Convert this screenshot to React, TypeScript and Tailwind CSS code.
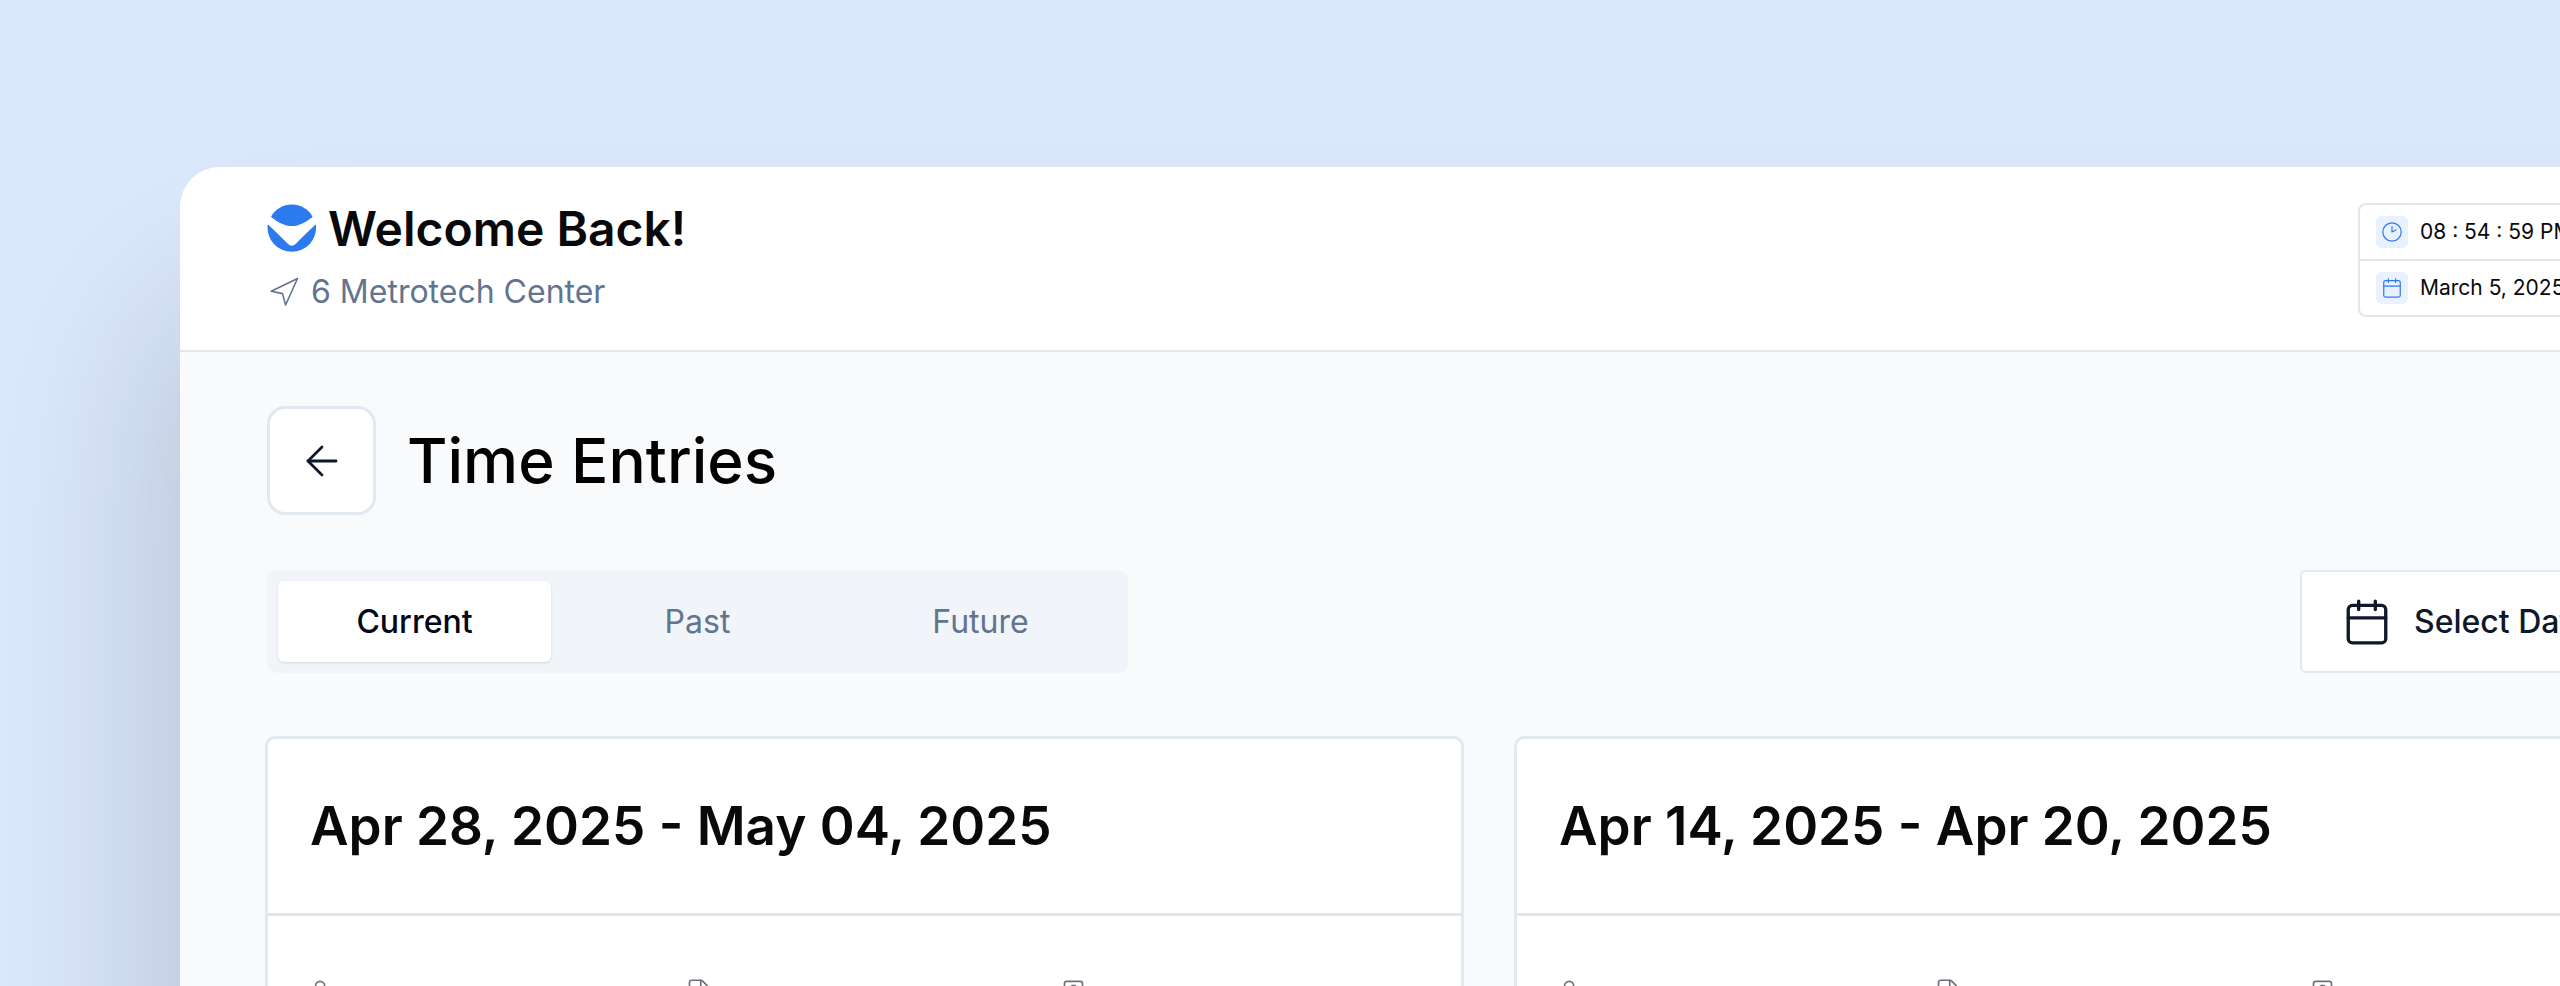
import { useState } from "react";
import { ArrowLeft, Calendar, File, UserMinus } from "lucide-react";

const tabs = ["Current", "Past", "Future"];
const weeks = ["Apr 28, 2025 - May 04, 2025", "Apr 14, 2025 - Apr 20, 2025"];

function Logo() {
  return (
    <svg viewBox="0 0 50 50" className="size-[50px] shrink-0" fill="#2b7af0" aria-hidden="true">
      <path d="M4.3 12.2C8.6 5.2 16.2.6 24.8.6s16.2 4.600 20.500 11.600c.2.4.1.7-.2 1C39 18.300 32 22 24.800 22S10.600 18.300 4.500 13.200c-.3-.3-.4-.6-.2-1Z" />
      <path d="M.6 21.300c0-.6.6-.8 1-.4C8 27 14.500 33.200 20.800 39.800c2.500 2.600 5.500 2.600 8 0C35 33.200 41.600 27 48 20.900c.4-.4 1-.2 1 .4A24.300 24.300 0 1 1 .6 21.300Z" />
    </svg>
  );
}

function LocationIcon() {
  return (
    <svg viewBox="0 0 32 32" className="size-8 shrink-0" fill="none" stroke="currentColor" strokeWidth="1.600" strokeLinejoin="round" aria-hidden="true">
      <path d="M30.500 2.500 4.200 15.300 15.500 17.600 18.600 29Z" />
    </svg>
  );
}

function ClockIcon() {
  return (
    <svg viewBox="0 0 20 20" className="size-5" fill="none" stroke="currentColor" strokeWidth="1.200" strokeLinecap="round" strokeLinejoin="round" aria-hidden="true">
      <circle cx="10" cy="10" r="9.200" />
      <path d="M10 4.500V10l4-2" />
    </svg>
  );
}

function BadgeIcon() {
  return (
    <svg viewBox="0 0 24 24" className="size-[27px]" fill="none" stroke="currentColor" strokeWidth="1.500" strokeLinecap="round" aria-hidden="true">
      <rect x="4" y="3" width="16" height="19" rx="2" />
      <circle cx="12" cy="9" r="2.500" />
      <path d="M8 18c.5-4 7.500-4 8 0" />
    </svg>
  );
}

function Header() {
  return (
    <header className="flex items-start justify-between border-b-2 border-slate-200 bg-white px-[87px] pt-9 pb-[33px]">
      <div className="pt-px">
        <div className="flex items-center gap-[11px]">
          <Logo />
          <h1 className="text-5xl font-semibold text-zinc-950">Welcome Back!</h1>
        </div>
        <p className="mt-[18px] flex items-center gap-3 text-[32px] leading-10 text-slate-500">
          <LocationIcon />
          6 Metrotech Center
        </p>
      </div>
      <div className="w-[353px] rounded-lg border-2 border-neutral-200 text-[21px] leading-8 text-zinc-950">
        <div className="flex items-center gap-3 border-b-2 border-neutral-200 px-4 py-[11px]">
          <span className="grid size-8 place-items-center rounded-md bg-[#e9f1fe] text-[#2b7af0]">
            <ClockIcon />
          </span>
          <time>08 : 54 : 59 PM</time>
        </div>
        <div className="flex items-center gap-3 px-4 py-[11px]">
          <span className="grid size-8 place-items-center rounded-md bg-[#e9f1fe] text-[#2b7af0]">
            <Calendar className="size-[22px]" strokeWidth={1.3} />
          </span>
          <time>March 5, 2025</time>
        </div>
      </div>
    </header>
  );
}

function WeekCard({ title }: { title: string }) {
  return (
    <article className="rounded-[10px] border-3 border-slate-200 bg-white">
      <h3 className="border-b-3 border-neutral-200 px-[42px] py-[57px] text-[53px] leading-[60px] font-semibold text-zinc-950">
        {title}
      </h3>
      {/* summary row: staff, notes, badge */}
      <div className="flex h-[420px] gap-[348px] px-[42px] pt-[62px] text-zinc-500">
        <UserMinus className="size-[27px]" strokeWidth={1.5} />
        <File className="size-[27px]" strokeWidth={1.5} />
        <BadgeIcon />
      </div>
    </article>
  );
}

export default function App() {
  const [active, setActive] = useState("Current");

  return (
    <div className="h-screen overflow-hidden bg-[#dce8fb] pt-[167px] font-['Inter',sans-serif]">
      <div className="-mr-[238px] ml-[180px] rounded-[40px] bg-slate-50 shadow-[0_150px_200px_0_rgba(15,23,42,0.22)]">
        <div className="overflow-hidden rounded-t-[40px]">
          <Header />
        </div>
        <main className="pb-24">
          <div className="flex items-center gap-[31px] px-[87px] pt-[54px]">
            <button
              type="button"
              aria-label="Back"
              className="grid size-[109px] place-items-center rounded-[18px] border-3 border-slate-200 bg-white text-slate-900"
            >
              <ArrowLeft className="size-12" strokeWidth={1.4} />
            </button>
            <h2 className="text-[62px] leading-[72px] font-medium text-black">Time Entries</h2>
          </div>

          <div className="mt-[55px] flex items-stretch justify-between px-[87px]">
            <div role="tablist" className="grid w-[861px] grid-cols-3 gap-[10px] rounded-[10px] bg-slate-100 p-[11px]">
              {tabs.map((tab) => (
                <button
                  key={tab}
                  type="button"
                  role="tab"
                  aria-selected={active === tab}
                  onClick={() => setActive(tab)}
                  className={
                    active === tab
                      ? "rounded-md bg-white py-5 text-[32px] leading-[41px] font-medium text-slate-950 shadow-sm"
                      : "rounded-md py-5 text-[32px] leading-[41px] text-slate-500"
                  }
                >
                  {tab}
                </button>
              ))}
            </div>
            <button
              type="button"
              className="flex w-[411px] items-center gap-[22px] rounded-md border-2 border-slate-200 bg-white pl-10 text-[32px] font-medium text-slate-900"
            >
              <Calendar className="size-[50px]" strokeWidth={1.6} />
              Select Date
            </button>
          </div>

          <section className="mt-[63px] grid grid-cols-2 gap-[50px] px-[85px]">
            {weeks.map((week) => (
              <WeekCard key={week} title={week} />
            ))}
          </section>
        </main>
      </div>
    </div>
  );
}
